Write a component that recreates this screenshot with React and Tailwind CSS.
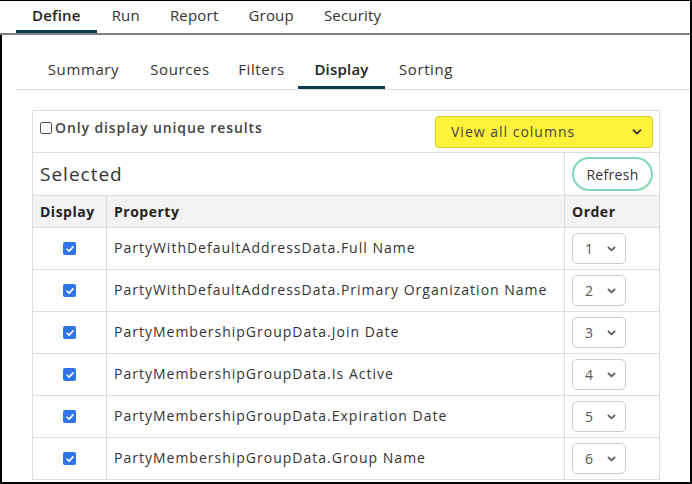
import React from "react";

const topTabs = ["Define", "Run", "Report", "Group", "Security"];
const subTabs = [
  { label: "Summary", w: "w-[103px]" },
  { label: "Sources", w: "w-[90px]" },
  { label: "Filters", w: "w-[73px]" },
  { label: "Display", w: "w-[87px]" },
  { label: "Sorting", w: "w-[82px]" },
];

const rows = [
  "PartyWithDefaultAddressData.Full Name",
  "PartyWithDefaultAddressData.Primary Organization Name",
  "PartyMembershipGroupData.Join Date",
  "PartyMembershipGroupData.Is Active",
  "PartyMembershipGroupData.Expiration Date",
  "PartyMembershipGroupData.Group Name",
];

const Chevron = ({ className }) => (
  <svg viewBox="0 0 10 6" className={className} fill="none" stroke="currentColor" strokeWidth="1.8" strokeLinecap="round" strokeLinejoin="round">
    <path d="M1.5 1.2 5 4.6 8.5 1.2" />
  </svg>
);

const Check = () => (
  <span className="flex h-[13px] w-[13px] items-center justify-center rounded-[2px] bg-[#2f74e8]">
    <svg viewBox="0 0 12 12" className="h-[10px] w-[10px]" fill="none" stroke="white" strokeWidth="2" strokeLinecap="round" strokeLinejoin="round">
      <path d="M2.5 6.3 5 8.6 9.6 3.4" />
    </svg>
  </span>
);

export default function App() {
  return (
    <div className="h-[484px] w-[692px] overflow-hidden bg-white text-[#333] font-['Open_Sans',sans-serif]">
      <div className="border-r-2 border-black h-full flex flex-col">
        {/* top tabs */}
        <div className="flex h-[33px] pl-4 text-[15px] tracking-[0.2px] border-t border-black">
          {topTabs.map((t, i) => (
            <div
              key={t}
              className={
                i === 0
                  ? "px-4 flex items-center border-b-[3px] border-[#0b3d4f] font-semibold text-[#222]"
                  : "px-[15px] flex items-center border-b-[3px] border-transparent text-[#333]"
              }
            >
              {t}
            </div>
          ))}
        </div>
        <div className="h-[2px] bg-[#808080]" />

        <div className="flex-1 border-l-2 border-b-2 border-black pl-[14px] flex flex-col">
          {/* sub tabs */}
          <div className="flex h-[55px] items-end border-b border-[#ddd] pl-[16px] text-[15px] tracking-[0.6px]">
            {subTabs.map((t) => (
              <div
                key={t.label}
                className={
                  t.label === "Display"
                    ? `${t.w} h-[37px] flex items-center justify-center border-b-[3px] border-[#0b3d4f] font-semibold text-[#222] tracking-[0.2px]`
                    : `${t.w} h-[37px] flex items-center justify-center border-b-[3px] border-transparent text-[#333]`
                }
              >
                {t.label}
              </div>
            ))}
          </div>

          {/* panel */}
          <div className="ml-4 mt-5 w-[628px] border-l border-r border-t border-[#ddd] text-[14px] tracking-[1px]">
            <div className="flex h-[42px] items-center justify-between border-b border-[#ddd] pl-[7px] pr-[6px]">
              <label className="flex items-center gap-[3px] -mt-[8px] font-semibold text-[#444] tracking-[0.9px]">
                <span className="h-[12px] w-[12px] rounded-[2px] border border-[#555]" />
                Only display unique results
              </label>
              <div className="flex h-[32px] w-[218px] items-center justify-between rounded-[4px] border border-[#d8cc30] bg-[#fff23a] pl-[15px] pr-[10px] text-[#444]">
                <span>View all columns</span>
                <Chevron className="h-[6px] w-[10px] text-[#333]" />
              </div>
            </div>

            <div className="flex h-[43px] border-b border-[#ddd]">
              <div className="flex flex-1 items-center pl-[7px] text-[19px] text-[#333]">Selected</div>
              <div className="flex w-[95px] items-center border-l border-[#ddd] pl-[7px]">
                <div className="flex h-[34px] w-[81px] items-center justify-center rounded-full border-2 border-[#7fd9b2] text-[#333] tracking-[0.3px]">
                  Refresh
                </div>
              </div>
            </div>

            <div className="flex h-[32px] border-b border-[#ddd] bg-[#f3f3f3] font-bold text-[#222] tracking-[0.5px]">
              <div className="flex w-[73px] items-center pl-[7px]">Display</div>
              <div className="flex flex-1 items-center border-l border-[#ddd] pl-[7px]">Property</div>
              <div className="flex w-[95px] items-center border-l border-[#ddd] pl-[7px]">Order</div>
            </div>

            {rows.map((r, i) => (
              <div key={r} className="flex h-[42px] border-b border-[#ddd]">
                <div className="flex w-[73px] items-center justify-center">
                  <Check />
                </div>
                <div className="flex flex-1 items-center border-l border-[#ddd] pl-[7px] pb-[2px] text-[#333]">{r}</div>
                <div className="flex w-[95px] items-center border-l border-[#ddd] pl-[7px]">
                  <div className="flex h-[31px] w-[54px] items-center justify-between rounded-[5px] border border-[#ccc] pl-[12px] pr-[9px] text-[#555]">
                    <span>{i + 1}</span>
                    <Chevron className="h-[6px] w-[9px] text-[#555]" />
                  </div>
                </div>
              </div>
            ))}
          </div>
        </div>
      </div>
    </div>
  );
}
